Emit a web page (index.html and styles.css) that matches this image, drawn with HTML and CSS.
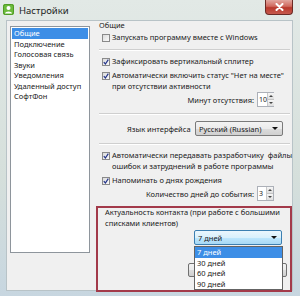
FILE: index.html
```html
<!DOCTYPE html>
<html lang="ru">
<head>
<meta charset="utf-8">
<title>Настройки</title>
<link rel="stylesheet" href="styles.css">
</head>
<body>
<div class="window">
  <div class="titlebar">
    <span class="app-icon">
      <svg width="11" height="11" viewBox="0 0 11 11"><rect x="0" y="0" width="11" height="11" rx="2" fill="#6cbb3c"/><rect x="0.5" y="0.5" width="10" height="10" rx="2" fill="none" stroke="#4f9a25"/><circle cx="5.5" cy="4" r="2" fill="#fff"/><path d="M2 9.5 C2 6.8 9 6.8 9 9.5 Z" fill="#fff"/></svg>
    </span>
    <span class="title">Настройки</span>
    <span class="close"><svg width="9" height="8" viewBox="0 0 9 8"><path d="M1.5 1 L7.5 7 M7.5 1 L1.5 7" stroke="#fff" stroke-width="2" stroke-linecap="round"/></svg></span>
  </div>
  <div class="client">
    <ul class="nav">
      <li class="selected">Общие</li>
      <li>Подключение</li>
      <li>Голосовая связь</li>
      <li>Звуки</li>
      <li>Уведомления</li>
      <li>Удаленный доступ</li>
      <li>СофтФон</li>
    </ul>
    <div class="panel">
      <div class="group-title">Общие</div>
      <div class="check c1"><span class="box"></span><span class="lbl">Запускать программу вместе с Windows</span></div>
      <div class="sep s1"></div>
      <div class="check c2"><span class="box on"><svg width="6" height="6" viewBox="0 0 6 6"><path d="M0.8 3.2 L2.4 5 L5.3 0.6" fill="none" stroke="#23348a" stroke-width="1.2"/></svg></span><span class="lbl">Зафиксировать вертикальный сплитер</span></div>
      <div class="check c3"><span class="box on"><svg width="6" height="6" viewBox="0 0 6 6"><path d="M0.8 3.2 L2.4 5 L5.3 0.6" fill="none" stroke="#23348a" stroke-width="1.2"/></svg></span><span class="lbl">Автоматически включить статус "Нет на месте"<br>при отсутствии активности</span></div>
      <div class="spin-row r1">
        <span class="spin-lbl">Минут отсутствия:</span>
        <span class="spin"><span class="spin-val">10</span><span class="spin-btns"><span class="sb"><i class="up"></i></span><span class="sb"><i class="down"></i></span></span></span>
      </div>
      <div class="sep s2"></div>
      <div class="lang-row">
        <span class="lang-lbl">Язык интерфейса</span>
        <span class="combo"><span class="combo-val">Русский (Russian)</span><span class="arrow"></span></span>
      </div>
      <div class="sep s3"></div>
      <div class="check c4"><span class="box on"><svg width="6" height="6" viewBox="0 0 6 6"><path d="M0.8 3.2 L2.4 5 L5.3 0.6" fill="none" stroke="#23348a" stroke-width="1.2"/></svg></span><span class="lbl">Автоматически передавать разработчику&nbsp; файлы<br>ошибок и затруднений в работе программы</span></div>
      <div class="check c5"><span class="box on"><svg width="6" height="6" viewBox="0 0 6 6"><path d="M0.8 3.2 L2.4 5 L5.3 0.6" fill="none" stroke="#23348a" stroke-width="1.2"/></svg></span><span class="lbl">Напоминать о днях рождения</span></div>
      <div class="spin-row r2">
        <span class="spin-lbl">Количество дней до события:</span>
        <span class="spin"><span class="spin-val">3</span><span class="spin-btns"><span class="sb"><i class="up"></i></span><span class="sb"><i class="down"></i></span></span></span>
      </div>
      <div class="highlight">
        <div class="hl-text">Актуальность контакта (при работе с большими<br>списками клиентов)</div>
        <div class="combo-wrap">
          <span class="combo focused"><span class="combo-val">7 дней</span><span class="arrow"></span></span>
          <ul class="dropdown">
            <li class="selected">7 дней</li>
            <li>30 дней</li>
            <li>60 дней</li>
            <li>90 дней</li>
          </ul>
        </div>
        <div class="buttons"><span class="btn"></span><span class="btn"></span></div>
      </div>
    </div>
  </div>
</div>
</body>
</html>
```
FILE: styles.css
```css
* { box-sizing: border-box; }
html, body { margin: 0; padding: 0; }
body {
  width: 300px; height: 296px; overflow: hidden;
  font-family: "Noto Sans", "Liberation Sans", sans-serif;
  font-size: 7.5px; color: #1a1a1a;
  background: #d9e2de;
}
.window {
  width: 300px; height: 296px;
  background: linear-gradient(to bottom, #e2e9e6 0, #d5dfdb 60%, #c7d6e0 100%);
  display: flex; flex-direction: column;
}
.titlebar {
  height: 20px; flex: none;
  display: flex; align-items: flex-start;
}
.app-icon { margin: 4px 0 0 3px; width: 11px; height: 11px; display: block; }
.app-icon svg { display: block; }
.title { margin: 5px 0 0 5px; font-size: 9.5px; line-height: 11px; color: #1e1e1e; }
.close {
  margin-left: auto; margin-right: 7px; margin-top: 0;
  width: 28px; height: 15px;
  background: linear-gradient(to bottom, #e2a7a0 0, #d0695e 45%, #b9382c 55%, #c65a4e 100%);
  border: 1px solid #6b2a25; border-top: none;
  border-radius: 0 0 4px 4px;
  display: flex; align-items: center; justify-content: center;
}
.close svg { display: block; }
.client {
  margin: 0 7px 0 6px; height: 271px;
  background: #f0f0f0;
  border: 1px solid #b8c3c7;
  display: flex;
}
.nav {
  list-style: none; margin: 5px 0 0 3px; padding: 1px;
  width: 80px; height: 227px;
  background: #fff; border: 1px solid #8e959c;
  flex: none;
}
.nav li { height: 10.5px; line-height: 10.5px; padding-left: 2px; white-space: nowrap; }
.nav li.selected { background: #3d8ee6; color: #fff; }
.panel { margin-left: 6px; width: 196px; position: relative; }
.group-title { margin-top: -1px; height: 10px; line-height: 10px; padding-left: 3px; }
.check { display: flex; align-items: flex-start; padding-left: 6px; line-height: 11px; white-space: nowrap; }
.box {
  flex: none; width: 8px; height: 8px; margin-top: 1.5px; margin-right: 2px;
  border: 1px solid #8a8a8a;
  background: linear-gradient(135deg, #dcdcdc, #fafafa);
  display: flex; align-items: center; justify-content: center;
}
.box svg { display: block; }
.c1 { margin-top: 2px; }
.c2 { margin-top: 5px; }
.c3 { margin-top: 3px; }
.c4 { margin-top: 5px; }
.c5 { margin-top: 3px; }
.sep { margin: 0 2px 0 3px; border-top: 1px solid #cfcfcf; border-bottom: 1px solid #fff; height: 2px; }
.s1 { margin-top: 6px; }
.s2 { margin-top: 6px; }
.s3 { margin-top: 7px; }
.spin-row { display: flex; justify-content: flex-end; align-items: center; height: 15px; padding-right: 18px; }
.r1 { margin-top: 0; }
.spin-lbl { margin-right: 3px; }
.spin {
  width: 17px; height: 15px; background: #fff; border: 1px solid #acb0b8;
  display: flex;
}
.spin-val { flex: 1; padding-left: 1px; line-height: 13px; font-size: 7px; white-space: nowrap; }
.spin-btns { width: 7px; flex: none; display: flex; flex-direction: column; border-left: 1px solid #c9c9c9; }
.sb {
  flex: 1; display: flex; align-items: center; justify-content: center;
  background: linear-gradient(#f6f6f6, #dedede); border-bottom: 1px solid #c3c3c3;
}
.sb:last-child { border-bottom: none; }
.up { width: 0; height: 0; border-left: 2px solid transparent; border-right: 2px solid transparent; border-bottom: 2px solid #444; }
.down { width: 0; height: 0; border-left: 2px solid transparent; border-right: 2px solid transparent; border-top: 2px solid #444; }
.lang-row { display: flex; align-items: center; margin-top: 6px; height: 15px; }
.lang-lbl { margin-left: 31px; }
.combo {
  margin-left: auto; margin-right: 9px;
  width: 88px; height: 15px;
  border: 1px solid #7a7a7a; border-radius: 2px;
  background: linear-gradient(to bottom, #f3f3f3 0, #ebebeb 50%, #dcdcdc 51%, #d0d0d0 100%);
  display: flex; align-items: center; padding: 0 4px 0 3px;
}
.combo-val { flex: 1; white-space: nowrap; }
.arrow { width: 0; height: 0; border-left: 3px solid transparent; border-right: 3px solid transparent; border-top: 3px solid #111; }
.highlight {
  margin-top: 5px; margin-left: 0;
  width: 196px; height: 86px;
  border: 2px solid #a33a4a;
  display: flex; flex-direction: column;
}
.hl-text { margin-top: -1px; padding-left: 7px; line-height: 11px; white-space: nowrap; }
.combo-wrap { position: relative; display: flex; margin-top: 1px; }
.combo.focused {
  margin-right: 8px;
  border-color: #3c7fb1;
  background: linear-gradient(to bottom, #eaf6fd 0, #d9f0fc 50%, #bee6fd 51%, #a7d9f5 100%);
}
.dropdown {
  position: absolute; top: 16px; right: 7px;
  width: 89px; height: 44px;
  list-style: none; margin: 0; padding: 0;
  background: #fff; border: 1px solid #646464;
  z-index: 2;
}
.dropdown li { height: 10.5px; line-height: 10.5px; padding-left: 2px; }
.dropdown li.selected { background: #3d8ee6; color: #fff; }
.buttons { display: flex; justify-content: flex-end; gap: 5px; margin-top: 18px; margin-right: 3px; }
.btn {
  width: 47px; height: 14px; border: 1px solid #707070; border-radius: 2px;
  background: linear-gradient(to bottom, #f2f2f2 0, #ebebeb 50%, #dddddd 51%, #cfcfcf 100%);
}
```
